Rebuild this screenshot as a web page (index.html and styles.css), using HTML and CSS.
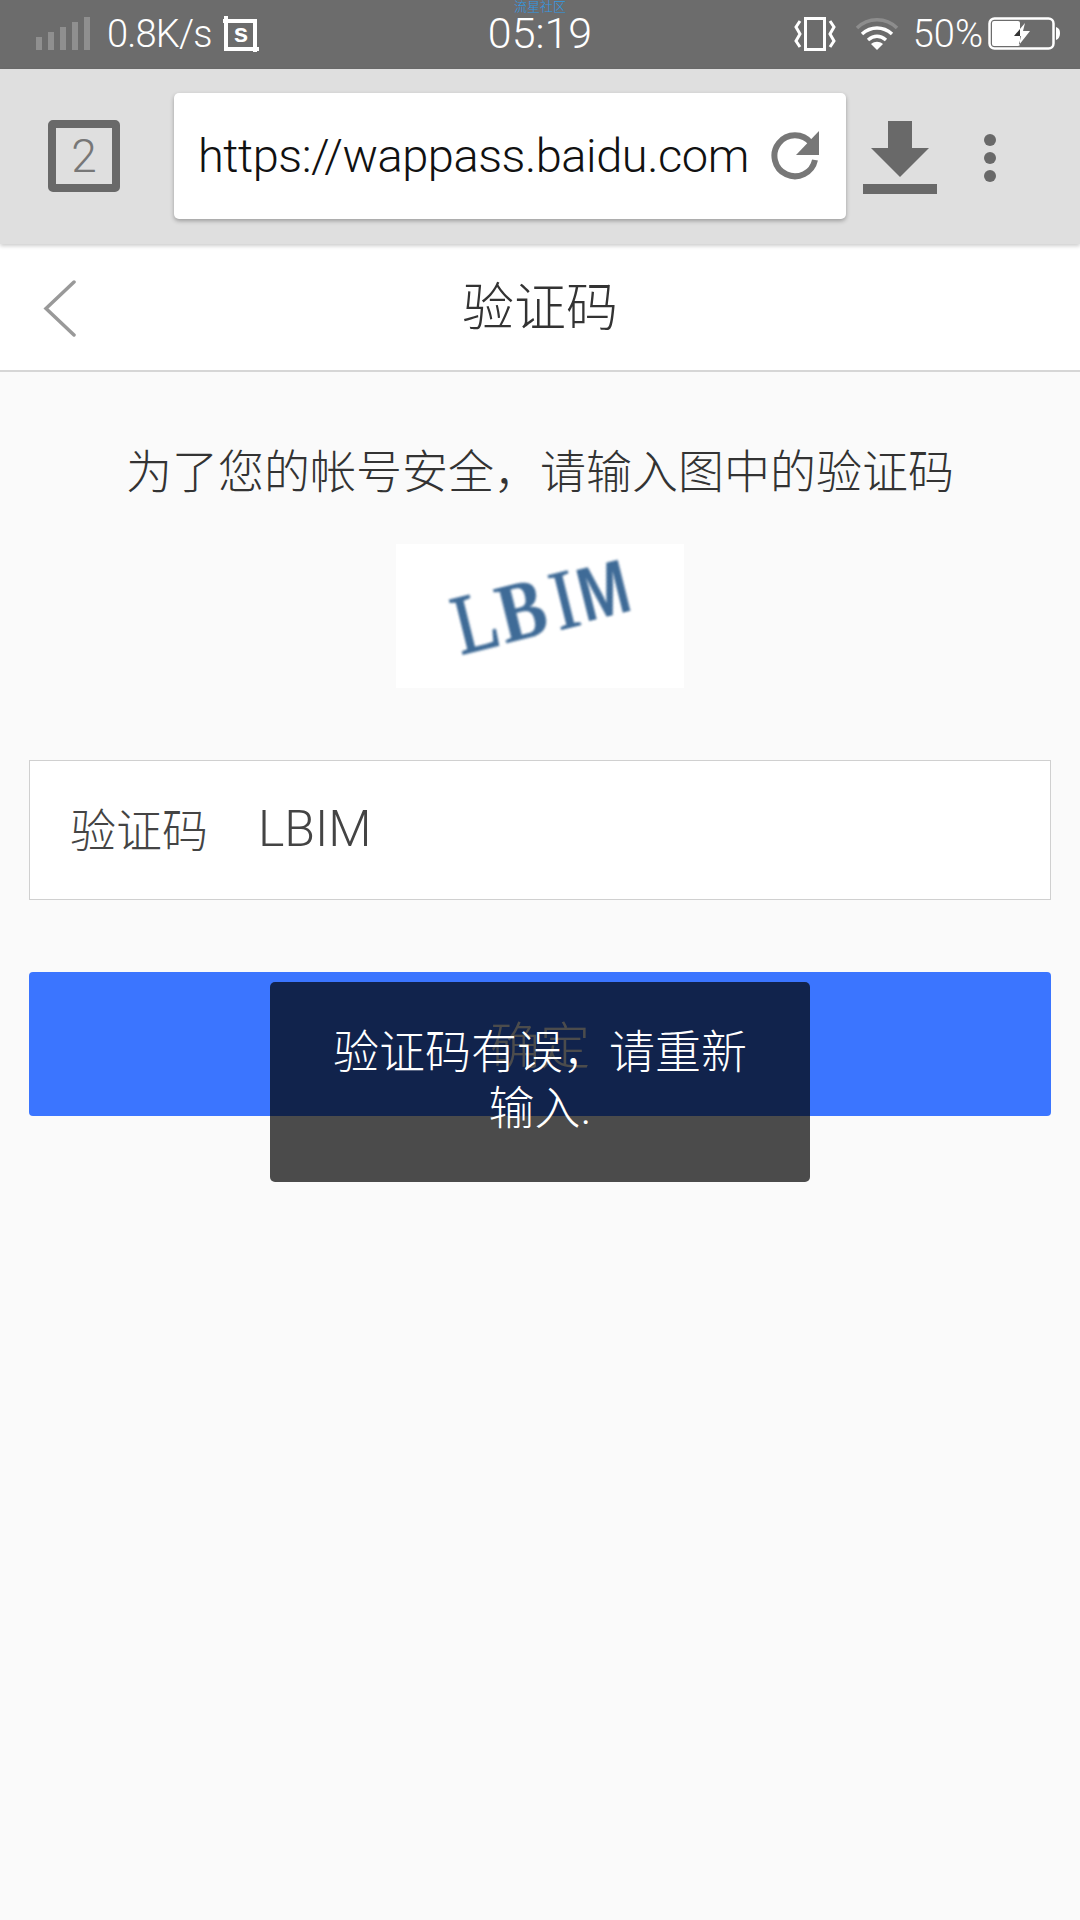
FILE: index.html
```html
<!DOCTYPE html>
<html lang="zh-CN">
<head>
    <meta charset="UTF-8">
    <meta name="viewport" content="width=device-width, initial-scale=1.0">
    <title>验证码</title>
    <link rel="stylesheet" href="styles.css">
</head>
<body>
    <div class="phone">
        <div class="status-bar">
            <div class="status-left">
                <svg class="signal" width="56" height="33" viewBox="0 0 56 33">
                    <rect x="0" y="20" width="6" height="13"/>
                    <rect x="12" y="15" width="6" height="18"/>
                    <rect x="24" y="10" width="6" height="23"/>
                    <rect x="36" y="5" width="6" height="28"/>
                    <rect x="48" y="0" width="6" height="33"/>
                </svg>
                <span class="speed">0.8K/s</span>
                <svg class="shot" width="37" height="36" viewBox="0 0 37 36">
                    <path d="M3 0v33h33M0 5h32v31" fill="none" stroke="#fff" stroke-width="4"/>
                    <text x="18" y="26" class="shot-s">s</text>
                </svg>
            </div>
            <div class="status-time">05:19</div>
            <div class="status-right">
                <svg width="42" height="34" viewBox="0 0 42 34" fill="none" stroke="#fff" stroke-width="3">
                    <rect x="11.500" y="1.500" width="19" height="31"/>
                    <path d="M6 4 2 10l4 7-4 7 4 6M36 4l4 6-4 7 4 7-4 6"/>
                </svg>
                <svg class="wifi" width="44" height="33" viewBox="0 0 44 33" fill="none" stroke-width="3.500">
                    <path d="M2 11C13 0 31 0 42 11" stroke="#8d8d8d"/>
                    <path d="M7 17c9-8 21-8 30 0M13 23c6-5 12-5 18 0" stroke="#fff"/>
                    <path d="M16 27 22 33 28 27c-4-3-8-3-12 0z" fill="#fff"/>
                </svg>
                <span class="battery-pct">50%</span>
                <svg class="battery" width="72" height="33" viewBox="0 0 72 33">
                    <clipPath id="battery-level"><rect x="0" y="0" width="32" height="33"/></clipPath>
                    <rect x="1.500" y="1.500" width="64" height="30" rx="5" fill="none" stroke="#fff" stroke-width="2.500"/>
                    <rect x="4" y="4" width="28" height="25" rx="2" fill="#fff"/>
                    <path d="M68 10c3 1 4 3 4 6s-1 6-4 7z" fill="#fff"/>
                    <path d="M37 6 26 19h7l-2 9 11-14h-7z" fill="#fff"/>
                    <path d="M37 6 26 19h7l-2 9 11-14h-7z" fill="#333" clip-path="url(#battery-level)"/>
                </svg>
            </div>
            <div class="watermark">流星社区</div>
        </div>

        <div class="toolbar">
            <div class="tab-count">2</div>
            <div class="url-card">
                <span class="url-text">https://wappass.baidu.com</span>
                <svg width="50" height="51" viewBox="0 0 50 51">
                    <path d="M41 13A20.500 20.500 0 1 0 45 30" fill="none" stroke="#777" stroke-width="6"/>
                    <path d="M49 1v24H26z" fill="#777"/>
                </svg>
            </div>
            <svg class="download" width="74" height="73" viewBox="0 0 74 73">
                <path d="M25 0h24v27h17L37 56 8 27h17z" fill="#696969"/>
                <rect x="0" y="63" width="74" height="10" fill="#696969"/>
            </svg>
            <div class="more">
                <span></span><span></span><span></span>
            </div>
        </div>

        <div class="title-bar">
            <svg class="back" width="33" height="57" viewBox="0 0 33 57">
                <path d="M31 2 3 28.500 31 55" fill="none" stroke="#999" stroke-width="3.500" stroke-linecap="round"/>
            </svg>
            <h1>验证码</h1>
        </div>

        <div class="content">
            <p class="hint">为了您的帐号安全，请输入图中的验证码</p>
            <div class="captcha">
                <div class="captcha-word">
                    <span class="c-l">L</span><span class="c-b">B</span><span class="c-i">I</span><span class="c-m">M</span>
                </div>
            </div>
            <div class="field">
                <span class="field-label">验证码</span>
                <span class="field-value">LBIM</span>
            </div>
            <button class="confirm">确定</button>
            <div class="toast">验证码有误，请重新输入.</div>
        </div>
    </div>
</body>
</html>
```

FILE: styles.css
```css
* {
    box-sizing: border-box;
}
html, body {
    margin: 0;
    padding: 0;
}
body {
    font-family: Roboto, "Noto Sans CJK SC", sans-serif;
    font-weight: 300;
    background-color: #fafafa;
    color: #333;
}
.phone {
    position: relative;
    width: 1080px;
    height: 1920px;
    overflow: hidden;
    display: flex;
    flex-direction: column;
}

/* status bar */
.status-bar {
    position: relative;
    height: 69px;
    flex: none;
    background-color: #6c6c6c;
    color: #fff;
    display: grid;
    grid-template-columns: minmax(0, 1fr) auto minmax(0, 1fr);
    align-items: center;
    padding-bottom: 2px;
}
.status-left, .status-right {
    display: flex;
    align-items: center;
}
.status-left {
    padding-left: 36px;
}
.status-right {
    justify-content: flex-end;
    padding-right: 20px;
}
.signal rect {
    fill: #8f8f8f;
}
.speed {
    font-size: 38px;
    margin-left: 15px;
    letter-spacing: -0.8px;
}
.shot {
    margin-left: 11px;
}
.shot-s {
    font-family: "Liberation Sans", sans-serif;
    font-size: 26px;
    font-weight: 700;
    fill: #fff;
    text-anchor: middle;
}
.status-time {
    font-size: 43px;
    line-height: 1;
}
.wifi {
    margin-left: 19px;
}
.battery-pct {
    font-size: 38px;
    margin-left: 14px;
}
.battery {
    margin-left: 5px;
}
.watermark {
    position: absolute;
    left: 514px;
    top: 0;
    font-family: "Noto Sans CJK SC", sans-serif;
    font-size: 13px;
    line-height: 12px;
    color: #2f9be8;
}

/* browser toolbar */
.toolbar {
    height: 175px;
    flex: none;
    background-color: #dfdfdf;
    display: flex;
    align-items: center;
    padding: 0 0 2px 48px;
    box-shadow: 0 2px 4px rgba(0, 0, 0, 0.2);
    position: relative;
}
.tab-count {
    width: 72px;
    height: 72px;
    border: 8px solid #696969;
    border-radius: 5px;
    font-size: 46px;
    color: #777;
    display: flex;
    align-items: center;
    justify-content: center;
}
.url-card {
    width: 672px;
    height: 126px;
    margin-left: 54px;
    padding: 0 26px 0 24px;
    background-color: #fff;
    border-radius: 5px;
    box-shadow: 0 2px 4px rgba(0, 0, 0, 0.3);
    display: flex;
    align-items: center;
    justify-content: space-between;
}
.url-text {
    font-size: 47px;
    letter-spacing: -0.45px;
    color: #111;
    white-space: nowrap;
}
.download {
    margin: 4px 0 0 17px;
}
.more {
    margin: 4px 0 0 47px;
    display: flex;
    flex-direction: column;
    gap: 6px;
}
.more span {
    width: 12px;
    height: 12px;
    border-radius: 50%;
    background-color: #696969;
}

/* page title */
.title-bar {
    height: 128px;
    flex: none;
    background-color: #fff;
    border-bottom: 2px solid #d6d6d6;
    display: grid;
    grid-template-columns: minmax(0, 1fr) auto minmax(0, 1fr);
    align-items: center;
}
.back {
    margin: 2px 0 0 43px;
}
.title-bar h1 {
    margin: 0 0 8px;
    font-size: 52px;
    font-weight: 300;
    color: #333;
}

/* form */
.content {
    position: relative;
    flex: 1;
    padding: 0 29px;
    display: flex;
    flex-direction: column;
    align-items: center;
}
.hint {
    margin: 69px 0 0;
    font-size: 46px;
    line-height: 62px;
    text-align: center;
}
.captcha {
    width: 288px;
    height: 144px;
    margin-top: 41px;
    background-color: #fff;
    display: flex;
    align-items: center;
    justify-content: center;
}
.captcha-word {
    display: flex;
    align-items: center;
    margin: 0 0 20px 4px;
    font-family: "Liberation Serif", serif;
    font-weight: 400;
    font-size: 84px;
    line-height: 1;
    color: #3f6b97;
    filter: blur(1.2px);
    transform: rotate(-14deg);
}
.captcha-word span {
    display: block;
}
.c-l {
    transform: scaleX(.85);
    -webkit-text-stroke: 1.5px #3f6b97;
}
.c-b {
    margin-left: -6px;
    font-weight: 700;
    transform: scaleX(.85);
}
.c-i {
    margin-left: 2px;
    -webkit-text-stroke: 1px #3f6b97;
    transform: scaleX(.9);
}
.c-m {
    margin-left: 1px;
    width: 56px;
    font-family: "Liberation Sans", sans-serif;
    font-weight: 700;
    font-size: 76px;
    transform: scaleX(.8);
    transform-origin: left center;
}
.field {
    width: 100%;
    height: 140px;
    margin-top: 72px;
    padding: 0 0 6px 40px;
    background-color: #fff;
    border: 1px solid #d0d0d0;
    display: flex;
    align-items: center;
    font-size: 46px;
    color: #444;
}
.field-value {
    margin: 3px 0 0 50px;
    font-size: 50px;
}
.confirm {
    width: 100%;
    height: 144px;
    margin-top: 72px;
    padding: 0 0 4px;
    background-color: #3b75ff;
    color: #fff;
    border: none;
    border-radius: 4px;
    font-family: inherit;
    font-weight: 300;
    font-size: 50px;
}

/* error toast, lies over the button */
.toast {
    position: absolute;
    left: 270px;
    top: 610px;
    width: 540px;
    height: 200px;
    padding: 42px 60px 0;
    background-color: rgba(0, 0, 0, 0.7);
    border-radius: 5px;
    color: #fff;
    font-size: 46px;
    line-height: 56px;
    text-align: center;
}
```
